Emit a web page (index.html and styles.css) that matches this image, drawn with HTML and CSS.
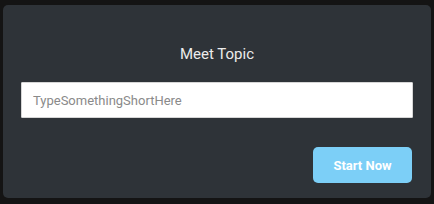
FILE: index.html
```html
<!DOCTYPE html>
<html lang="en">
<head>
  <meta charset="UTF-8">
  <title>Meet Topic</title>
  <link rel="stylesheet" href="styles.css">
</head>
<body>
<div class="backdrop">
  <div class="dialog">
    <div class="dialog-title">Meet Topic</div>
    <input type="text" class="topic-input" placeholder="TypeSomethingShortHere">
    <div class="dialog-actions">
      <button class="start-btn">Start Now</button>
    </div>
  </div>
</div>
</body>
</html>
```

FILE: styles.css
```css
body {
  margin: 0;
  background-color: #141414;
  font-family: Roboto, "Liberation Sans", sans-serif;
}
.backdrop {
  width: 434px;
  height: 204px;
  padding: 5px 3px 0 3px;
  box-sizing: border-box;
}
.dialog {
  background-color: #2e3338;
  border-radius: 5px;
  height: 193px;
  box-sizing: border-box;
  padding: 40px 18px 0 18px;
}
.dialog-title {
  color: #ececec;
  font-size: 15px;
  line-height: 18px;
  text-align: center;
}
.topic-input {
  display: block;
  width: 100%;
  height: 36px;
  box-sizing: border-box;
  margin-top: 19px;
  border: 1px solid #d6d6d6;
  border-radius: 1px;
  background: #fff;
  padding: 0 11px;
  font-family: Roboto, "Liberation Sans", sans-serif;
  font-size: 13px;
  outline: none;
}
.topic-input::placeholder {
  color: #8a8a8a;
}
.dialog-actions {
  display: flex;
  justify-content: flex-end;
  margin-top: 29px;
  padding-right: 1px;
}
.start-btn {
  width: 99px;
  height: 36px;
  border: none;
  border-radius: 5px;
  background-color: #7ccff7;
  color: #fff;
  font-family: Roboto, "Liberation Sans", sans-serif;
  font-size: 13px;
  font-weight: bold;
  cursor: pointer;
}
```
